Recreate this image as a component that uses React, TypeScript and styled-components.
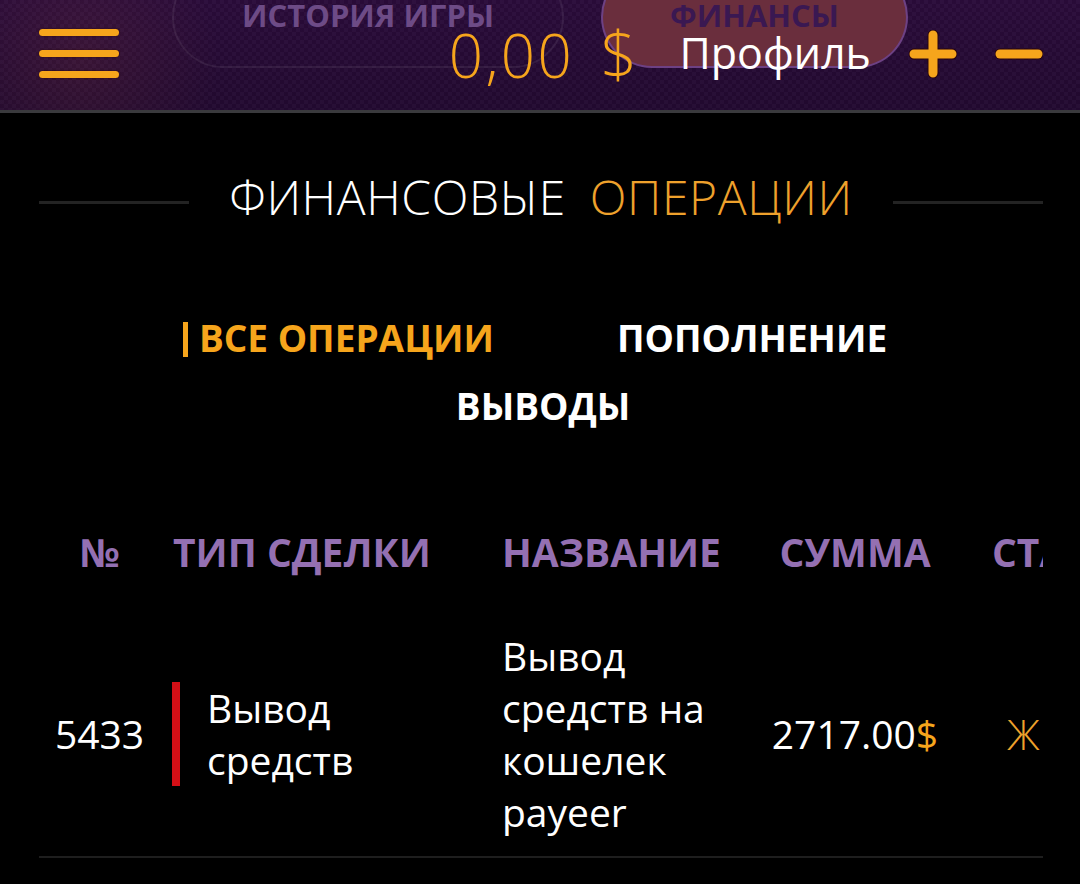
import React from "react";
import styled, { createGlobalStyle } from "styled-components";

const GlobalStyle = createGlobalStyle`
  html, body {
    margin: 0;
    padding: 0;
    background: #000;
    overflow: hidden;
  }
  body {
    font-family: "Open Sans", "Noto Sans", sans-serif;
    color: #fff;
  }
  * { box-sizing: border-box; }
`;

const ORANGE = "#f6a51c";

const Page = styled.div`
  width: 1080px;
  height: 884px;
  background: #000;
  overflow: hidden;
`;

const Header = styled.header`
  position: relative;
  height: 113px;
  padding: 0 37px 0 39px;
  display: flex;
  align-items: center;
  overflow: hidden;
  border-bottom: 3px solid #3a3a3d;
  background:
    radial-gradient(circle at 80px 58px, rgba(255, 120, 70, 0.09), rgba(255, 120, 70, 0) 140px),
    repeating-conic-gradient(rgba(255, 255, 255, 0.018) 0 25%, rgba(0, 0, 0, 0.05) 0 50%) 0 0 / 8px 8px,
    linear-gradient(#2b0c3b, #230a31);
`;

const NavPill = styled.div<{ $left: number; $width: number; $active?: boolean }>`
  position: absolute;
  top: -34px;
  left: ${(p) => p.$left}px;
  width: ${(p) => p.$width}px;
  height: 102px;
  border-radius: 51px;
  display: flex;
  align-items: flex-end;
  justify-content: center;
  padding-bottom: 33px;
  font-weight: 700;
  font-size: 31px;
  line-height: 36px;
  color: ${(p) => (p.$active ? "#3a1852" : "#6d4b86")};
  border: 2px solid ${(p) => (p.$active ? "rgba(110, 70, 150, 0.8)" : "rgba(255, 255, 255, 0.07)")};
  background: ${(p) => (p.$active ? "#6a2e3d" : "transparent")};
`;

const Burger = styled.button`
  position: relative;
  z-index: 1;
  width: 80px;
  padding: 0;
  border: 0;
  background: none;
  display: flex;
  flex-direction: column;
  gap: 14px;
  margin-top: -3px;
`;

const BurgerBar = styled.span`
  display: block;
  height: 7px;
  border-radius: 4px;
  background: ${ORANGE};
  box-shadow: 0 0 2px rgba(40, 0, 0, 0.8);
`;

const HeaderRight = styled.div`
  position: relative;
  z-index: 1;
  margin-left: auto;
  display: flex;
  align-items: center;
  margin-top: -3px;
`;

const Balance = styled.div`
  font-weight: 300;
  font-size: 60px;
  line-height: 60px;
  letter-spacing: 2.5px;
  word-spacing: 8px;
  color: ${ORANGE};
  margin-top: 1px;
  white-space: nowrap;
`;

const BalanceCurrency = styled.span`
  font-size: 64px;
`;

const Profile = styled.div`
  font-weight: 400;
  font-size: 43px;
  line-height: 43px;
  color: #fff;
  margin: 0 0 3px 40px;
`;

const IconBtn = styled.button<{ $ml: number }>`
  border: 0;
  background: none;
  padding: 0;
  margin-left: ${(p) => p.$ml}px;
  width: 48px;
  height: 48px;
  display: block;
  svg { display: block; }
`;

const Content = styled.main`
  padding: 0 37px 0 39px;
`;

const TitleRow = styled.div`
  margin-top: 49px;
  display: flex;
  align-items: center;
  gap: 40px;
`;

const TitleLine = styled.div`
  flex: 1;
  height: 3px;
  background: #232323;
  margin-top: 10px;
`;

const Title = styled.h1`
  margin: 0;
  font-weight: 300;
  font-size: 48px;
  line-height: 70px;
  letter-spacing: 0.6px;
  color: #fff;
  white-space: nowrap;
`;

const TitleAccent = styled.span`
  color: #eea12c;
  margin-left: 24px;
`;

const Tabs = styled.nav`
  margin-top: 82px;
  display: flex;
  flex-wrap: wrap;
  justify-content: center;
  row-gap: 20px;
  padding-left: 4px;
`;

const Tab = styled.div<{ $active?: boolean }>`
  position: relative;
  margin: 0 61.5px;
  font-weight: 700;
  font-size: 37px;
  line-height: 48px;
  color: ${(p) => (p.$active ? ORANGE : "#fff")};
  white-space: nowrap;
  &::before {
    content: "";
    display: ${(p) => (p.$active ? "block" : "none")};
    position: absolute;
    left: -16px;
    top: 8px;
    width: 5px;
    height: 35px;
    background: ${ORANGE};
  }
`;

const TableWrap = styled.div`
  margin-top: 98px;
  overflow: hidden;
`;

const Grid = styled.div`
  display: grid;
  grid-template-columns: 121px 330px 265px 200px 260px;
  width: max-content;
`;

const HeadCell = styled.div<{ $align?: string; $pl?: number }>`
  font-weight: 700;
  font-size: 39px;
  line-height: 48px;
  color: #9470b2;
  text-align: ${(p) => p.$align || "left"};
  padding-left: ${(p) => p.$pl ?? 0}px;
  white-space: nowrap;
  padding-bottom: 36px;
`;

const Cell = styled.div<{ $align?: string; $pl?: number }>`
  display: flex;
  align-items: center;
  justify-content: ${(p) => (p.$align === "center" ? "center" : "flex-start")};
  padding: 18px 0 18px ${(p) => p.$pl ?? 0}px;
  border-bottom: 2px solid #1e1e1e;
  font-size: 39px;
  line-height: 52px;
  color: #fff;
`;

const TypeText = styled.div`
  border-left: 8px solid #d40f16;
  padding-left: 27px;
  max-width: 280px;
`;

const NameText = styled.div`
  max-width: 241px;
`;

const Dollar = styled.span`
  color: ${ORANGE};
`;

const Status = styled.span`
  color: #eea12c;
  font-weight: 300;
  font-size: 42px;
  letter-spacing: 6px;
  padding-left: 15px;
  white-space: nowrap;
`;

const Plus = () => (
  <svg width="48" height="48" viewBox="0 0 48 48">
    <path d="M24 5 V43 M5 24 H43" stroke="rgba(40,0,0,0.7)" strokeWidth="11" strokeLinecap="round" />
    <path d="M24 5 V43 M5 24 H43" stroke={ORANGE} strokeWidth="9" strokeLinecap="round" />
  </svg>
);

const Minus = () => (
  <svg width="48" height="48" viewBox="0 0 48 48">
    <path d="M5 24 H43" stroke="rgba(40,0,0,0.7)" strokeWidth="11" strokeLinecap="round" />
    <path d="M5 24 H43" stroke={ORANGE} strokeWidth="9" strokeLinecap="round" />
  </svg>
);

export default function App() {
  return (
    <Page>
      <GlobalStyle />
      <Header>
        <NavPill $left={172} $width={392}>ИСТОРИЯ ИГРЫ</NavPill>
        <NavPill $left={601} $width={307} $active>ФИНАНСЫ</NavPill>
        <Burger aria-label="menu">
          <BurgerBar />
          <BurgerBar />
          <BurgerBar />
        </Burger>
        <HeaderRight>
          <Balance>
            0,00 <BalanceCurrency>$</BalanceCurrency>
          </Balance>
          <Profile>Профиль</Profile>
          <IconBtn $ml={38} aria-label="plus"><Plus /></IconBtn>
          <IconBtn $ml={38} aria-label="minus"><Minus /></IconBtn>
        </HeaderRight>
      </Header>
      <Content>
        <TitleRow>
          <TitleLine />
          <Title>
            ФИНАНСОВЫЕ<TitleAccent>ОПЕРАЦИИ</TitleAccent>
          </Title>
          <TitleLine />
        </TitleRow>
        <Tabs>
          <Tab $active>ВСЕ ОПЕРАЦИИ</Tab>
          <Tab>ПОПОЛНЕНИЕ</Tab>
          <Tab>ВЫВОДЫ</Tab>
        </Tabs>
        <TableWrap>
          <Grid>
            <HeadCell $align="center">№</HeadCell>
            <HeadCell $pl={13}>ТИП СДЕЛКИ</HeadCell>
            <HeadCell $pl={12}>НАЗВАНИЕ</HeadCell>
            <HeadCell $align="center">СУММА</HeadCell>
            <HeadCell $pl={37}>СТАТУС</HeadCell>

            <Cell $align="center">5433</Cell>
            <Cell $pl={12}>
              <TypeText>Вывод средств</TypeText>
            </Cell>
            <Cell $pl={12}>
              <NameText>Вывод средств на кошелек payeer</NameText>
            </Cell>
            <Cell $align="center">
              <span>
                2717.00<Dollar>$</Dollar>
              </span>
            </Cell>
            <Cell $pl={37}>
              <Status>Ждёт</Status>
            </Cell>
          </Grid>
        </TableWrap>
      </Content>
    </Page>
  );
}
